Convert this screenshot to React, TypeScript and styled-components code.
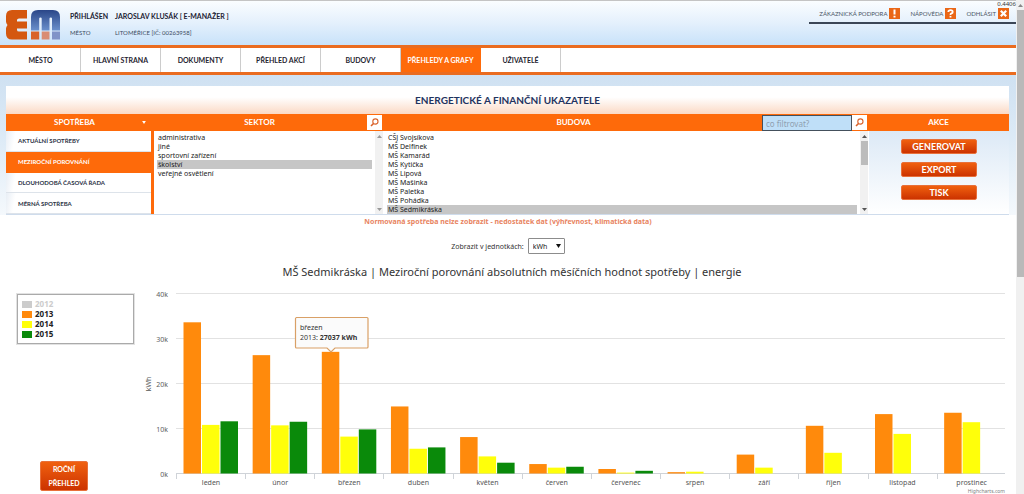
import React from "react";
import styled, { createGlobalStyle, css } from "styled-components";

const heading = `"Lato", "Noto Sans", sans-serif`;
const sans = `"Noto Sans", "Open Sans", sans-serif`;
const orange = "#fe6a0a";

const GlobalStyle = createGlobalStyle`
  * { box-sizing: border-box; }
  body { margin: 0; background: #fff; font-family: ${sans}; color: #333; overflow: hidden; }
  button, input, select { font-family: inherit; margin: 0; }
  h1, h2, p, ul { margin: 0; padding: 0; font-weight: normal; list-style: none; }
  a { color: inherit; text-decoration: none; }
`;

const Page = styled.div`
  display: grid;
  grid-template-columns: 1fr 8px;
  height: 100vh;
  overflow: hidden;
`;

const Main = styled.div`
  min-width: 0;
  overflow: hidden;
`;

const PageRail = styled.div`
  background: #f0f0f0;
  display: flex;
  flex-direction: column;
  align-items: center;
`;

const PageThumb = styled.div`
  width: 7px;
  height: 54vh;
  background: #b9b9b9;
`;

const RailCap = styled.div`
  height: 10px;
  display: flex;
  align-items: center;
`;

const Header = styled.header`
  display: flex;
  justify-content: space-between;
  height: 45px;
  padding-left: 6px;
  border-top: 1px solid #c4c4c4;
  background: linear-gradient(#fafdff, #e4f0fc 50%, #c8e2fa);
`;

const Identity = styled.div`
  display: flex;
  gap: 9px;
  padding-top: 8px;
`;

const UserGrid = styled.div`
  display: grid;
  grid-template-columns: 45px auto;
  grid-auto-rows: 17px;
  align-content: start;
  line-height: 14px;
  font-family: ${heading};
  font-size: 6px;
  color: #3c4c62;
`;

const Strong = styled.strong`
  font-size: 7px;
  color: #1c2233;
`;

const HeaderLinks = styled.nav`
  display: flex;
  align-items: flex-start;
  gap: 10px;
  height: 23px;
  margin-left: auto;
  padding: 7px 7px 0 10px;
  border-bottom: 2px solid #3b4656;
  font-family: ${heading};
  font-size: 6px;
  line-height: 11px;
  color: #4a5565;
`;

const HeaderLink = styled.a`
  display: flex;
  align-items: center;
  gap: 2px;
`;

const Timing = styled.span`
  position: absolute;
  top: 1px;
  right: 8px;
  font-family: ${sans};
  font-size: 6px;
  line-height: 7px;
  color: #333;
`;

const TopNav = styled.nav`
  display: flex;
  height: 30px;
  padding-left: 1px;
  border-top: 3px solid #ea6c20;
  border-bottom: 3px solid #ea6c20;
  background: #fff;
`;

const TopTab = styled.a<{ $active?: boolean }>`
  width: 80px;
  border-right: 1px solid #ccc;
  display: flex;
  align-items: center;
  justify-content: center;
  font-family: ${heading};
  font-size: 7px;
  font-weight: 700;
  color: #1f2430;
  ${(p) => p.$active && css`
    background: ${orange};
    color: #fff;
    border-color: ${orange};
  `}
`;

const Backdrop = styled.main`
  padding: 11px 7px 0 6px;
  background: linear-gradient(#cfe1f2, #dceaf6 60px, #fff 175px);
`;

const TitleBar = styled.h1`
  height: 28px;
  line-height: 29px;
  text-align: center;
  background: linear-gradient(#fff 40%, #fbd9c4);
  font-family: ${heading};
  font-size: 10px;
  font-weight: 700;
  color: #1f3360;
`;

const Panel = styled.div`
  display: grid;
  grid-template-columns: 145px 233px 1fr 140px;
  height: 101px;
  background: #fff;
  border-bottom: 1px solid #cfdcec;
`;

const Column = styled.section`
  min-width: 0;
  display: flex;
  flex-direction: column;
`;

const ColumnHead = styled.div`
  display: flex;
  align-items: center;
  justify-content: flex-end;
  height: 17px;
  padding: 1px 2px 1px 1px;
  background: ${orange};
  color: #fff;
`;

const ColumnTitle = styled.h2`
  flex: 1;
  text-align: center;
  font-family: ${heading};
  font-size: 8px;
  line-height: 15px;
  font-weight: 700;
`;

const Caret = styled.svg`
  width: 4px;
  height: 3px;
  margin-right: 3px;
`;

const SearchButton = styled.button`
  width: 15px;
  height: 15px;
  padding: 0;
  border: 0;
  background: #fff;
  display: grid;
  place-items: center;
`;

const FilterInput = styled.input`
  width: 90px;
  height: 16px;
  padding: 2px 3px 0;
  border: 1px solid #44505c;
  background: #bfdff8;
  font-size: 8px;
  color: #333;
  outline: none;
  &::placeholder { color: #8fa0b0; opacity: 1; }
`;

const Menu = styled.ul`
  flex: 1;
  display: grid;
  grid-auto-rows: 1fr;
`;

const MenuLink = styled.a<{ $active?: boolean }>`
  display: flex;
  align-items: center;
  height: 100%;
  padding-left: 12px;
  border-bottom: 1px solid #dde3ea;
  background: linear-gradient(100deg, #e8eef5, #fff 10px);
  font-family: ${heading};
  font-size: 6px;
  font-weight: 700;
  color: #2c3346;
  ${(p) => p.$active && css`
    background: ${orange};
    color: #fff;
    border-color: ${orange};
  `}
`;

const ListWrap = styled.div<{ $edge?: boolean }>`
  flex: 1;
  min-height: 0;
  display: flex;
  border-left: ${(p) => (p.$edge ? 3 : 0)}px solid ${orange};
`;

const ListBox = styled.select`
  flex: 1;
  min-width: 0;
  height: 100%;
  padding: 2px 3px 0;
  border: 0;
  outline: none;
  background: #fff;
  color: #222;
  font-size: 7px;
  overflow: hidden;
  scrollbar-width: none;
  option {
    height: 9px;
    min-height: 9px;
    line-height: 9px;
    padding: 0 1px;
    font-size: 7px;
  }
  option:checked {
    background: #c6c6c6 linear-gradient(#c6c6c6, #c6c6c6);
    color: #222;
  }
`;

const ListRail = styled.div`
  width: 8px;
  margin-right: 1px;
  background: #f1f1f1;
  display: flex;
  flex-direction: column;
  justify-content: space-between;
  align-items: center;
`;

const ListThumb = styled.div`
  width: 7px;
  height: 24px;
  margin-bottom: auto;
  background: #bcbcbc;
`;

const Actions = styled.div`
  flex: 1;
  display: flex;
  flex-direction: column;
  align-items: center;
  gap: 8px;
  padding-top: 8px;
  background: linear-gradient(#dce9f6, #fff);
`;

const ActionButton = styled.button`
  width: 76px;
  height: 15px;
  padding: 0;
  border: 1px solid #e8703a;
  border-radius: 2px;
  background: linear-gradient(#f0600f, #cc3300);
  color: #fff;
  font-family: ${heading};
  font-size: 9px;
  line-height: 12px;
  font-weight: 700;
`;

const Notice = styled.p`
  text-align: center;
  font-size: 7px;
  line-height: 13px;
  font-weight: 700;
  color: #e8845f;
`;

const Units = styled.div`
  display: flex;
  justify-content: center;
  align-items: center;
  gap: 4px;
  margin-top: 10px;
  font-size: 7px;
  color: #333;
`;

const UnitSelectWrap = styled.span`
  position: relative;
  display: flex;
`;

const UnitSelect = styled.select`
  appearance: none;
  width: 37px;
  height: 16px;
  padding: 0 4px;
  border: 1px solid #8c8c8c;
  border-radius: 1px;
  background: #fff;
  font-size: 7px;
  color: #222;
`;

const UnitArrow = styled.svg`
  position: absolute;
  right: 4px;
  top: 6px;
  width: 5px;
  height: 4px;
  pointer-events: none;
`;

const ChartTitle = styled.h2`
  margin-top: 9px;
  padding-left: 8px;
  text-align: center;
  font-size: 11px;
  line-height: 18px;
  color: #333;
`;

const ChartRow = styled.div`
  display: grid;
  grid-template-columns: 145px 1fr;
  margin-top: 3px;
`;

const Side = styled.aside`
  display: flex;
  flex-direction: column;
  justify-content: space-between;
  align-items: flex-start;
  padding: 10px 11px 3px 17px;
`;

const Legend = styled.ul`
  width: 100%;
  height: 50px;
  padding: 3px 4px;
  border: 1px solid #aaa;
  outline: 1px solid #e2e2e2;
`;

const LegendItem = styled.li<{ $off?: boolean }>`
  display: flex;
  align-items: center;
  gap: 3px;
  height: 11px;
  margin-bottom: -1px;
  padding-top: 1px;
  font-size: 8px;
  line-height: 10px;
  font-weight: 700;
  color: ${(p) => (p.$off ? "#ccc" : "#222")};
`;

const Swatch = styled.span<{ $color: string }>`
  width: 10px;
  height: 7px;
  background: ${(p) => p.$color};
`;

const YearButton = styled(ActionButton)`
  width: 48px;
  height: 30px;
  margin-left: 23px;
  font-size: 7px;
  line-height: 14px;
`;

const Chart = styled.svg`
  display: block;
  width: 100%;
  font-family: ${sans};
`;

const tabs = ["MĚSTO", "HLAVNÍ STRANA", "DOKUMENTY", "PŘEHLED AKCÍ", "BUDOVY", "PŘEHLEDY A GRAFY", "UŽIVATELÉ"];
const menu = ["AKTUÁLNÍ SPOTŘEBY", "MEZIROČNÍ POROVNÁNÍ", "DLOUHODOBÁ ČASOVÁ ŘADA", "MĚRNÁ SPOTŘEBA"];
const sectors = ["administrativa", "jiné", "sportovní zařízení", "školství", "veřejné osvětlení"];
const buildings = ["CŠJ Svojsíkova", "MŠ Delfínek", "MŠ Kamarád", "MŠ Kytička", "MŠ Lipová", "MŠ Mašinka", "MŠ Paletka", "MŠ Pohádka", "MŠ Sedmikráska"];
const months = ["leden", "únor", "březen", "duben", "květen", "červen", "červenec", "srpen", "září", "říjen", "listopad", "prostinec"];
const series = [
  { year: "2013", color: "#ff8a0c", values: [33.6, 26.3, 27.037, 14.9, 8.1, 2.1, 1, 0.3, 4.2, 10.6, 13.2, 13.5] },
  { year: "2014", color: "#ffff0a", values: [10.8, 10.7, 8.2, 5.5, 3.8, 1.3, 0.2, 0.4, 1.3, 4.6, 8.8, 11.4] },
  { year: "2015", color: "#0a8a0a", values: [11.6, 11.5, 9.8, 5.8, 2.4, 1.5, 0.6, 0, 0, 0, 0, 0] },
];

const PLOT = { left: 31, right: 860, base: 189.5, perK: 4.5, step: 69.15 };

function Triangle({ up, color = "#555" }: { up?: boolean; color?: string }) {
  return (
    <svg width="5" height="3" viewBox="0 0 5 3" aria-hidden="true">
      <path d={up ? "M0 3L2.5 0L5 3Z" : "M0 0L2.5 3L5 0Z"} fill={color} />
    </svg>
  );
}

function Magnifier() {
  return (
    <svg width="9" height="9" viewBox="0 0 9 9" fill="none" stroke="#d9622a" aria-hidden="true">
      <circle cx="5.4" cy="3.5" r="2.6" strokeWidth="1.1" />
      <path d="M3.5 5.4L1 8" strokeWidth="1.5" />
    </svg>
  );
}

function Logo() {
  return (
    <svg width="55" height="32" viewBox="0 0 55 32" role="img" aria-label="EM">
      <defs>
        <linearGradient id="logoBlue" x1="0" y1="0" x2="0" y2="1">
          <stop offset="0" stopColor="#2a4688" />
          <stop offset="1" stopColor="#6a90cc" />
        </linearGradient>
      </defs>
      <path d="M6 1H21V9.500H13Q11 9.500 11 11V12.500H21V19.500H11V21Q11 22.500 13 22.500H21V30.500H6Q0 30.500 0 24.500V19.500Q0 18 1.500 16Q0 14 0 12.500V7Q0 1 6 1Z" fill="#d4570f" />
      <path d="M25 21.500V8Q25 1 32 1H47Q54 1 54 8V21.500H46V9.500Q46 8.500 44.800 8.500T43.500 9.500V21.500H35.700V9.500Q35.700 8.500 34.500 8.500T33.200 9.500V21.500Z" fill="url(#logoBlue)" />
      <path d="M25 22.500H33.200V30.500H25Z" fill="#d9622a" />
      <path d="M35.700 22.500H43.500V30.500H35.700Z" fill="#d98c74" />
      <path d="M46 22.500H54V30.500H46Z" fill="#8093c8" />
    </svg>
  );
}

function Badge({ kind }: { kind: "alert" | "help" | "close" }) {
  return (
    <svg width="11" height="11" viewBox="0 0 11 11" fill="none" stroke="#fff" strokeWidth="1.8" aria-hidden="true">
      <rect width="11" height="11" fill="#ea6717" stroke="none" />
      {kind === "alert" && <path d="M5.500 1.500V6.500M5.500 7.800V9.600" strokeWidth="2" />}
      {kind === "help" && <path d="M3.300 3.900Q3.300 2.200 5.500 2.200T7.700 3.900Q7.700 4.900 6.500 5.400T5.500 7M5.500 8V9.600" />}
      {kind === "close" && <path d="M2.800 2.800L8.200 8.200M8.200 2.800L2.800 8.200" strokeWidth="2.200" />}
    </svg>
  );
}

function ConsumptionChart() {
  return (
    <Chart viewBox="0 0 871 210" role="img" aria-label="Meziroční porovnání spotřeby energie">
      {[0, 10, 20, 30, 40].map((k) => {
        const y = Math.round(PLOT.base - k * PLOT.perK - 0.5) + 0.5;
        return (
          <g key={k}>
            <path d={`M${PLOT.left} ${y}H${PLOT.right}`} stroke={k ? "#e2e2e2" : "#cfd3d8"} />
            <text x="23" y={y + 3} textAnchor="end" fontSize="7" fill="#606060">{k}k</text>
          </g>
        );
      })}
      <text transform="translate(6 100) rotate(-90)" textAnchor="middle" fontSize="7" fill="#555">kWh</text>
      {months.map((m, i) => {
        const x = PLOT.left + i * PLOT.step;
        return (
          <g key={m}>
            <path d={`M${Math.round(x) + 0.5} 189V195`} stroke="#cfd3d8" />
            {series.map((s, j) => {
              const h = s.values[i] * PLOT.perK;
              return h > 0 && (
                <rect key={s.year} x={x + 7.5 + j * 18.5} y={PLOT.base - h} width="17.500" height={h} fill={s.color} />
              );
            })}
            <text x={x + 35} y="201" textAnchor="middle" fontSize="7" fill="#555">{m}</text>
          </g>
        );
      })}
      <path d="M151 33.500H222Q223 33.500 223 34.500V63Q223 64 222 64H190L186 68L182 64H151.500Q150.500 64 150.500 63V34.500Q150.500 33.500 151.500 33.500Z" fill="#fbfbfb" stroke="#d9a066" strokeWidth="1.200" />
      <text x="155" y="46" fontSize="7" fill="#333">březen</text>
      <text x="155" y="56" fontSize="7" fill="#333">2013: <tspan fontWeight="700">27037 kWh</tspan></text>
      <text x="860" y="209" textAnchor="end" fontSize="5" fill="#808080">Highcharts.com</text>
    </Chart>
  );
}

export default function App() {
  return (
    <Page>
      <GlobalStyle />
      <Main>
        <Header>
          <Identity>
            <Logo />
            <UserGrid>
              <Strong>PŘIHLÁŠEN</Strong>
              <Strong>JAROSLAV KLUSÁK [ E-MANAŽER ]</Strong>
              <span>MĚSTO</span>
              <span>LITOMĚŘICE [IČ: 00263958]</span>
            </UserGrid>
          </Identity>
          <HeaderLinks>
            <HeaderLink href="#podpora">ZÁKAZNICKÁ PODPORA <Badge kind="alert" /></HeaderLink>
            <HeaderLink href="#napoveda">NÁPOVĚDA <Badge kind="help" /></HeaderLink>
            <HeaderLink href="#odhlasit">ODHLÁSIT <Badge kind="close" /></HeaderLink>
            <Timing>0.4406</Timing>
          </HeaderLinks>
        </Header>
        <TopNav>
          {tabs.map((t, i) => <TopTab key={t} href="#" $active={i === 5}>{t}</TopTab>)}
        </TopNav>
        <Backdrop>
          <TitleBar>ENERGETICKÉ A FINANČNÍ UKAZATELE</TitleBar>
          <Panel>
            <Column>
              <ColumnHead>
                <ColumnTitle>SPOTŘEBA</ColumnTitle>
                <Caret viewBox="0 0 5 4" aria-hidden="true"><path d="M0 0H5L2.500 4Z" fill="#fff" /></Caret>
              </ColumnHead>
              <Menu>
                {menu.map((m, i) => <li key={m}><MenuLink href="#" $active={i === 1}>{m}</MenuLink></li>)}
              </Menu>
            </Column>
            <Column>
              <ColumnHead>
                <ColumnTitle>SEKTOR</ColumnTitle>
                <SearchButton aria-label="Hledat sektor"><Magnifier /></SearchButton>
              </ColumnHead>
              <ListWrap $edge>
                <ListBox multiple aria-label="Sektor" defaultValue={["školství"]}>
                  {sectors.map((s) => <option key={s}>{s}</option>)}
                </ListBox>
                <ListRail>
                  <RailCap><Triangle up color="#999" /></RailCap>
                  <RailCap><Triangle color="#999" /></RailCap>
                </ListRail>
              </ListWrap>
            </Column>
            <Column>
              <ColumnHead>
                <ColumnTitle>BUDOVA</ColumnTitle>
                <FilterInput aria-label="Filtr budov" placeholder="co filtrovat?" />
                <SearchButton aria-label="Hledat budovu"><Magnifier /></SearchButton>
              </ColumnHead>
              <ListWrap>
                <ListBox multiple aria-label="Budova" defaultValue={["MŠ Sedmikráska"]}>
                  {buildings.map((b) => <option key={b}>{b}</option>)}
                </ListBox>
                <ListRail>
                  <RailCap><Triangle up /></RailCap>
                  <ListThumb />
                  <RailCap><Triangle /></RailCap>
                </ListRail>
              </ListWrap>
            </Column>
            <Column>
              <ColumnHead><ColumnTitle>AKCE</ColumnTitle></ColumnHead>
              <Actions>
                <ActionButton>GENEROVAT</ActionButton>
                <ActionButton>EXPORT</ActionButton>
                <ActionButton>TISK</ActionButton>
              </Actions>
            </Column>
          </Panel>
        </Backdrop>
        <Notice>Normovaná spotřeba nelze zobrazit - nedostatek dat (výhřevnost, klimatická data)</Notice>
        <Units>
          <label htmlFor="unit">Zobrazit v jednotkách:</label>
          <UnitSelectWrap>
            <UnitSelect id="unit" defaultValue="kWh">
              <option>kWh</option>
              <option>MWh</option>
              <option>GJ</option>
            </UnitSelect>
            <UnitArrow viewBox="0 0 5 4" aria-hidden="true"><path d="M0 0H5L2.500 4Z" fill="#111" /></UnitArrow>
          </UnitSelectWrap>
        </Units>
        <ChartTitle>MŠ Sedmikráska | Meziroční porovnání absolutních měsíčních hodnot spotřeby | energie</ChartTitle>
        <ChartRow>
          <Side>
            <Legend>
              <LegendItem $off><Swatch $color="#ccc" />2012</LegendItem>
              {series.map((s) => <LegendItem key={s.year}><Swatch $color={s.color} />{s.year}</LegendItem>)}
            </Legend>
            <YearButton>ROČNÍ<br />PŘEHLED</YearButton>
          </Side>
          <ConsumptionChart />
        </ChartRow>
      </Main>
      <PageRail>
        <RailCap><Triangle up color="#888" /></RailCap>
        <PageThumb />
      </PageRail>
    </Page>
  );
}
